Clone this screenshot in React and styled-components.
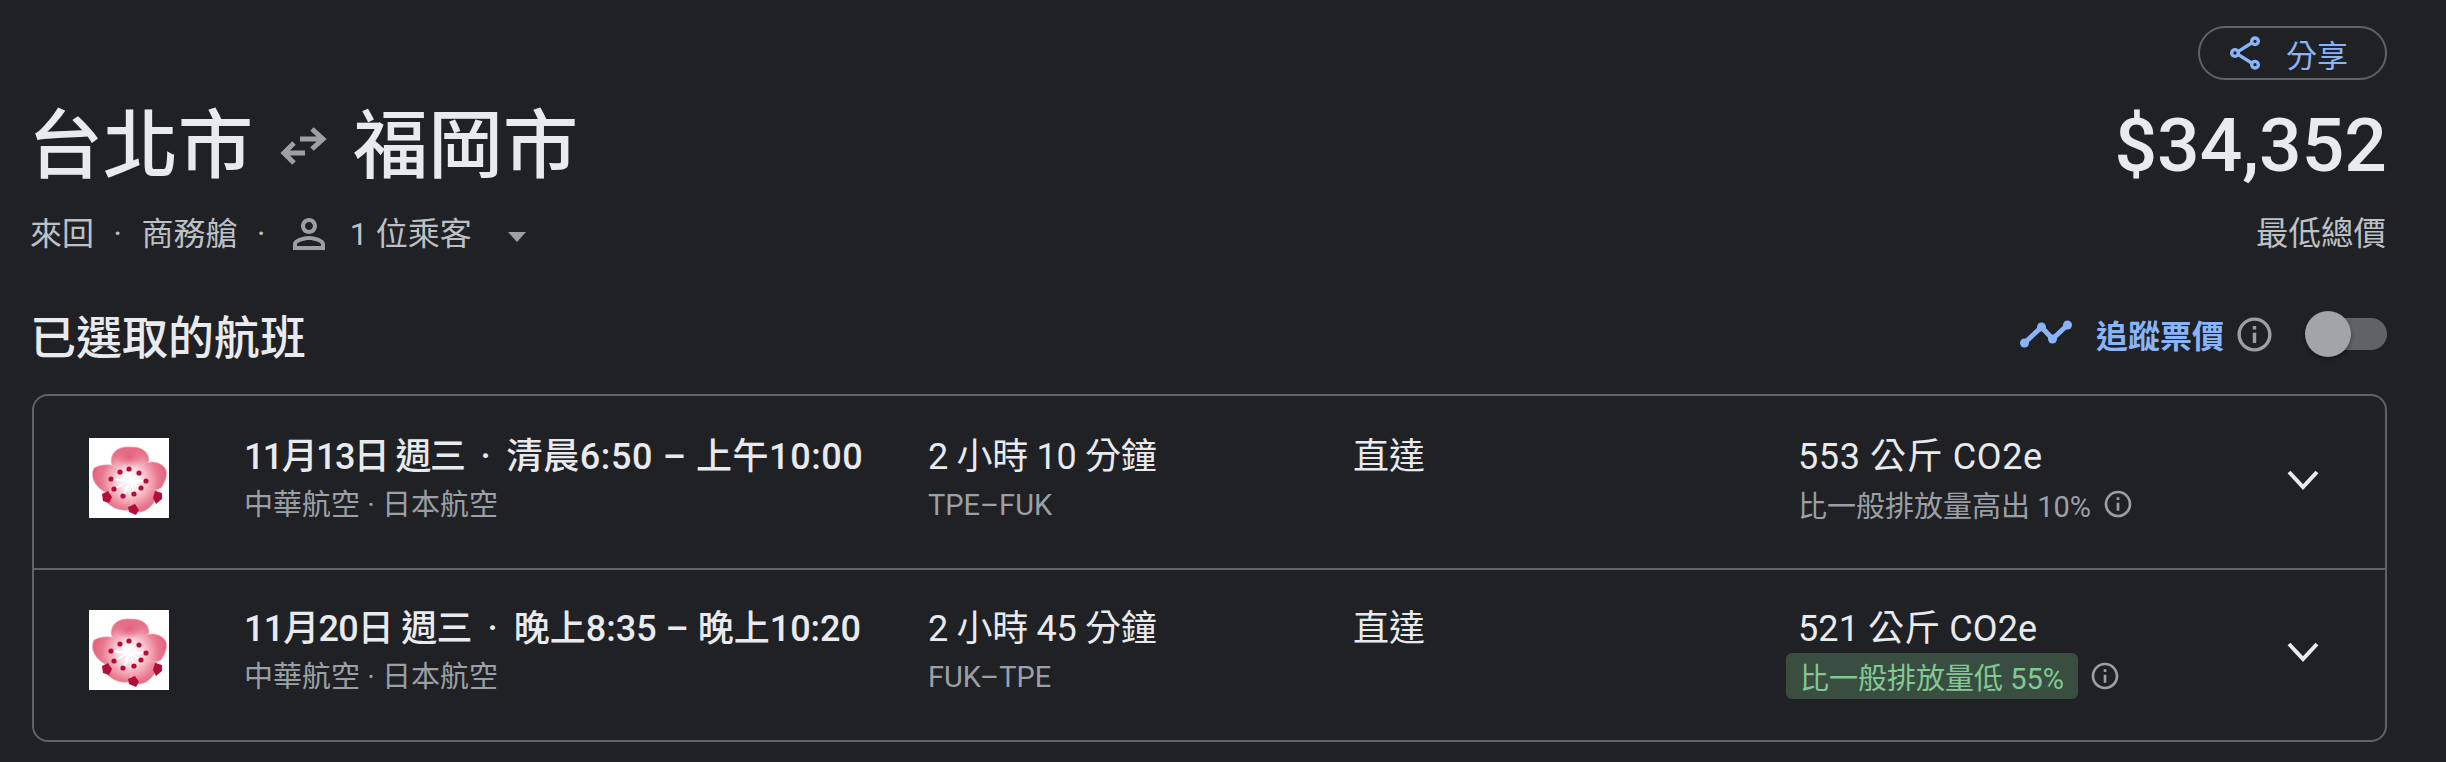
import styled, { createGlobalStyle } from "styled-components";

const GlobalStyle = createGlobalStyle`
  html, body {
    margin: 0;
    background: #202124;
  }
  body {
    font-family: "Roboto", "Noto Sans CJK TC", sans-serif;
    color: #e8eaed;
  }
`;

const flights = [
  {
    id: 1,
    when: "11月13日 週三",
    whenSpacing: -1.6,
    times: "清晨6:50 – 上午10:00",
    timesSpacing: 0.6,
    duration: "2 小時 10 分鐘",
    route: "TPE–FUK",
    co2: "553 公斤 CO2e",
    co2Spacing: 0.6,
    note: "比一般排放量高出 10%",
  },
  {
    id: 2,
    when: "11月20日 週三",
    whenSpacing: -0.8,
    times: "晚上8:35 – 晚上10:20",
    timesSpacing: 0,
    duration: "2 小時 45 分鐘",
    route: "FUK–TPE",
    co2: "521 公斤 CO2e",
    co2Spacing: 0.1,
    note: "比一般排放量低 55%",
    low: true,
  },
];

const InfoIcon = ({ size = 34, color = "#9aa0a6" }) => (
  <svg width={size} height={size} viewBox="0 0 24 24" fill={color}>
    <path d="M11 7h2v2h-2zm0 4h2v6h-2zm1-9C6.48 2 2 6.48 2 12s4.48 10 10 10 10-4.48 10-10S17.52 2 12 2zm0 18c-4.41 0-8-3.59-8-8s3.59-8 8-8 8 3.59 8 8-3.59 8-8 8z" />
  </svg>
);

const ShareIcon = () => (
  <svg width="40" height="40" viewBox="0 0 24 24" fill="none" stroke="#8ab4f8" strokeWidth="2">
    <circle cx="18" cy="5" r="2" />
    <circle cx="6" cy="12" r="2" />
    <circle cx="18" cy="19" r="2" />
    <path d="M8 11l8-5M8 13l8 5" />
  </svg>
);

const SwapIcon = () => (
  <svg width="48" height="40" viewBox="0 0 48 40" fill="none" stroke="#9aa0a6" strokeWidth="5">
    <path d="M21 13h23M33 3l11 10-11 10" />
    <path d="M26 27H5M15 17L5 27l10 10" />
  </svg>
);

const PersonIcon = () => (
  <svg width="48" height="48" viewBox="0 0 24 24" fill="#9aa0a6">
    <path d="M12 6c1.1 0 2 .9 2 2s-.9 2-2 2-2-.9-2-2 .9-2 2-2m0 9c2.7 0 5.8 1.29 6 2v1H6v-.99c.2-.72 3.3-2.01 6-2.01m0-11C9.79 4 8 5.79 8 8s1.79 4 4 4 4-1.79 4-4-1.79-4-4-4zm0 9c-2.67 0-8 1.34-8 4v3h16v-3c0-2.66-5.33-4-8-4z" />
  </svg>
);

const TrendIcon = () => (
  <svg width="52" height="30" viewBox="0 0 52 30" fill="none" stroke="#8ab4f8" strokeWidth="5" strokeLinejoin="round">
    <path d="M4.5 24L21.5 8l11 12L47.5 6" />
    <g fill="#8ab4f8" stroke="none">
      <circle cx="4.5" cy="24" r="4.5" />
      <circle cx="21.5" cy="8" r="4.5" />
      <circle cx="32.5" cy="20" r="4.5" />
      <circle cx="47.5" cy="6" r="4.5" />
    </g>
  </svg>
);

const Chevron = () => (
  <svg width="34" height="22" viewBox="0 0 34 22" fill="none" stroke="#e8eaed" strokeWidth="4">
    <path d="M3 3l14 15L31 3" />
  </svg>
);

// plum blossom logo, petals traced by eye from the reference
const petals = [
  "M22 24C22 12 32 8 42 9C52 8 60 14 60 22C58 30 50 38 41 43C32 36 24 32 22 24Z",
  "M54 26C62 22 72 24 76 30C80 36 76 44 72 50C66 54 58 52 41 43C48 36 52 30 54 26Z",
  "M5 30C12 26 20 26 26 28C30 34 36 38 41 43C34 52 24 56 16 54C8 50 0 40 5 30Z",
  "M41 43C32 50 22 54 14 58C18 68 30 74 40 72C44 64 44 54 41 43Z",
  "M41 43C48 50 60 50 68 52C70 60 62 72 52 74C46 74 40 72 40 72C44 64 44 54 41 43Z",
];
const stamens = [
  [31, 34], [40, 31], [50, 35], [22, 41], [57, 43], [25, 51], [34, 58], [45, 56], [52, 50],
];

const Logo = ({ id }) => (
  <LogoBox>
    <svg width="80" height="80" viewBox="0 0 80 80">
      <defs>
        <radialGradient id={`petal${id}`} gradientUnits="userSpaceOnUse" cx="41" cy="43" r="38">
          <stop offset="0" stopColor="#ffffff" />
          <stop offset="0.25" stopColor="#fdecef" />
          <stop offset="0.5" stopColor="#f6b0bd" />
          <stop offset="0.75" stopColor="#e9788e" />
          <stop offset="1" stopColor="#e2607b" />
        </radialGradient>
        <radialGradient id={`crown${id}`}>
          <stop offset="0" stopColor="#e2607b" />
          <stop offset="1" stopColor="#e2607b" stopOpacity="0" />
        </radialGradient>
        <filter id={`soft${id}`}>
          <feGaussianBlur stdDeviation="0.6" />
        </filter>
      </defs>
      <g filter={`url(#soft${id})`}>
        <g fill={`url(#petal${id})`} stroke="#f4bcc6" strokeWidth="0.6">
          {petals.map((d) => (
            <path key={d} d={d} />
          ))}
        </g>
        <ellipse cx="40" cy="19" rx="15" ry="10" fill={`url(#crown${id})`} />
        <g stroke="#fff" strokeWidth="1.8">
          {stamens.map(([x, y]) => (
            <line key={`${x}${y}`} x1="41" y1="43" x2={x} y2={y} />
          ))}
        </g>
        <g fill="#b5103a">
          {stamens.map(([x, y]) => (
            <circle key={`${x}-${y}`} cx={x} cy={y} r="2.6" />
          ))}
          <path d="M13 56l6-3 4 6-3 6-6-2zM66 53l7 2 0 6-6 5-3-6zM39 69l7-3 4 6-3 5-7-3z" />
        </g>
      </g>
    </svg>
  </LogoBox>
);

const App = () => (
  <Page>
    <GlobalStyle />
    <Header>
      <div>
        <Route>
          台北市
          <SwapIcon />
          福岡市
        </Route>
        <TripMeta>
          <span>來回</span>
          <Dot>·</Dot>
          <span>商務艙</span>
          <Dot>·</Dot>
          <PersonIcon />
          <span>1 位乘客</span>
          <Caret />
        </TripMeta>
      </div>
      <PriceBlock>
        <ShareButton>
          <ShareIcon />
          分享
        </ShareButton>
        <Price>$34,352</Price>
        <PriceLabel>最低總價</PriceLabel>
      </PriceBlock>
    </Header>

    <SectionBar>
      <SectionTitle>已選取的航班</SectionTitle>
      <Tracker>
        <TrendIcon />
        <TrackLabel>追蹤票價</TrackLabel>
        <InfoIcon size={41} />
        <Toggle>
          <Knob />
        </Toggle>
      </Tracker>
    </SectionBar>

    <Card>
      {flights.map((f) => (
        <Row key={f.id}>
          <Logo id={f.id} />
          <div>
            <Times>
              <Spaced $spacing={f.whenSpacing}>{f.when}</Spaced>
              <TimeDot>·</TimeDot>
              <Spaced $spacing={f.timesSpacing}>{f.times}</Spaced>
            </Times>
            <Sub>中華航空 · 日本航空</Sub>
          </div>
          <div>
            <Duration>{f.duration}</Duration>
            <Sub>{f.route}</Sub>
          </div>
          <Primary>直達</Primary>
          <div>
            <Primary>
              <Spaced $spacing={f.co2Spacing}>{f.co2}</Spaced>
            </Primary>
            <NoteLine>
              <Note $low={f.low}>{f.note}</Note>
              <InfoIcon size={32} />
            </NoteLine>
          </div>
          <ChevronCell>
            <Chevron />
          </ChevronCell>
        </Row>
      ))}
    </Card>
  </Page>
);

const Page = styled.div`
  padding: 26px 59px 0 32px;
  height: 736px;
`;

const Header = styled.header`
  display: flex;
  justify-content: space-between;
  align-items: flex-start;
`;

const Route = styled.h1`
  display: flex;
  align-items: center;
  gap: 26px;
  margin: 72px 0 0 -4px;
  font-size: 75px;
  line-height: 96px;
  font-weight: 500;
`;

const TripMeta = styled.div`
  display: flex;
  align-items: center;
  margin: 16px 0 0 -2px;
  font-size: 32px;
  line-height: 48px;
  color: #bdc1c6;
  svg {
    margin-right: 17px;
  }
`;

const Dot = styled.span`
  margin: 0 19.5px;
`;

const Caret = styled.span`
  width: 0;
  height: 0;
  margin-left: 36px;
  margin-top: 6px;
  border-left: 9px solid transparent;
  border-right: 9px solid transparent;
  border-top: 10px solid #9aa0a6;
`;

const PriceBlock = styled.div`
  display: flex;
  flex-direction: column;
  align-items: flex-end;
`;

const ShareButton = styled.button`
  display: flex;
  align-items: center;
  gap: 21px;
  box-sizing: border-box;
  width: 189px;
  height: 54px;
  padding: 0 0 0 25px;
  border: 2px solid #5f6368;
  border-radius: 27px;
  background: transparent;
  color: #8ab4f8;
  font: inherit;
  font-size: 31px;
`;

const Price = styled.div`
  margin-top: 17px;
  font-size: 75px;
  line-height: 96px;
  font-weight: 500;
`;

const PriceLabel = styled.div`
  margin: 17px 1px 0 0;
  font-size: 32.5px;
  line-height: 48px;
  color: #bdc1c6;
`;

const SectionBar = styled.div`
  display: flex;
  justify-content: space-between;
  align-items: center;
  margin-top: 46px;
  height: 60px;
`;

const SectionTitle = styled.h2`
  margin: 0 0 0 -2px;
  font-size: 46px;
  font-weight: 500;
`;

const Tracker = styled.div`
  display: flex;
  align-items: center;
`;

const TrackLabel = styled.span`
  margin: 0 10px 0 24px;
  font-size: 32px;
  font-weight: 700;
  color: #8ab4f8;
`;

const Toggle = styled.div`
  position: relative;
  width: 76px;
  height: 32px;
  margin-left: 36px;
  border-radius: 16px;
  background: #5f6368;
`;

const Knob = styled.span`
  position: absolute;
  left: -6px;
  top: -7px;
  width: 46px;
  height: 46px;
  border-radius: 50%;
  background: #a1a4a9;
  box-shadow: 0 2px 4px rgba(0, 0, 0, 0.4);
`;

const Card = styled.div`
  margin-top: 30px;
  border: 2px solid #5f6368;
  border-radius: 16px;
`;

const Row = styled.div`
  display: grid;
  grid-template-columns: 155px 684px 425px 445px 1fr 60px;
  box-sizing: border-box;
  height: 172px;
  padding: 40px 54px 0 55px;
  & + & {
    padding-top: 38px;
    border-top: 2px solid #5f6368;
  }
`;

const LogoBox = styled.div`
  width: 80px;
  height: 80px;
  margin-top: 2px;
  background: #fff;
  svg {
    display: block;
  }
`;

const Primary = styled.div`
  font-size: 36px;
  line-height: 42px;
`;

const Times = styled(Primary)`
  font-weight: 500;
`;

const Spaced = styled.span`
  letter-spacing: ${(p) => p.$spacing}px;
`;

const Duration = styled(Primary)`
  letter-spacing: -0.3px;
`;

const TimeDot = styled.span`
  margin: 0 16px;
`;

const Sub = styled.div`
  margin-top: 7px;
  font-size: 29px;
  line-height: 40px;
  color: #9aa0a6;
`;

const NoteLine = styled.div`
  display: flex;
  align-items: center;
  gap: 11px;
  margin-top: 6px;
  height: 40px;
`;

const Note = styled.span`
  font-size: 29px;
  color: ${(p) => (p.$low ? "#81c995" : "#9aa0a6")};
  ${(p) =>
    p.$low &&
    `
    margin-left: -12px;
    padding: 2px 14px;
    border-radius: 6px;
    background: #394e40;
  `}
`;

const ChevronCell = styled.div`
  display: flex;
  justify-content: center;
  padding: 33px 0 0 4px;
`;

export default App;
